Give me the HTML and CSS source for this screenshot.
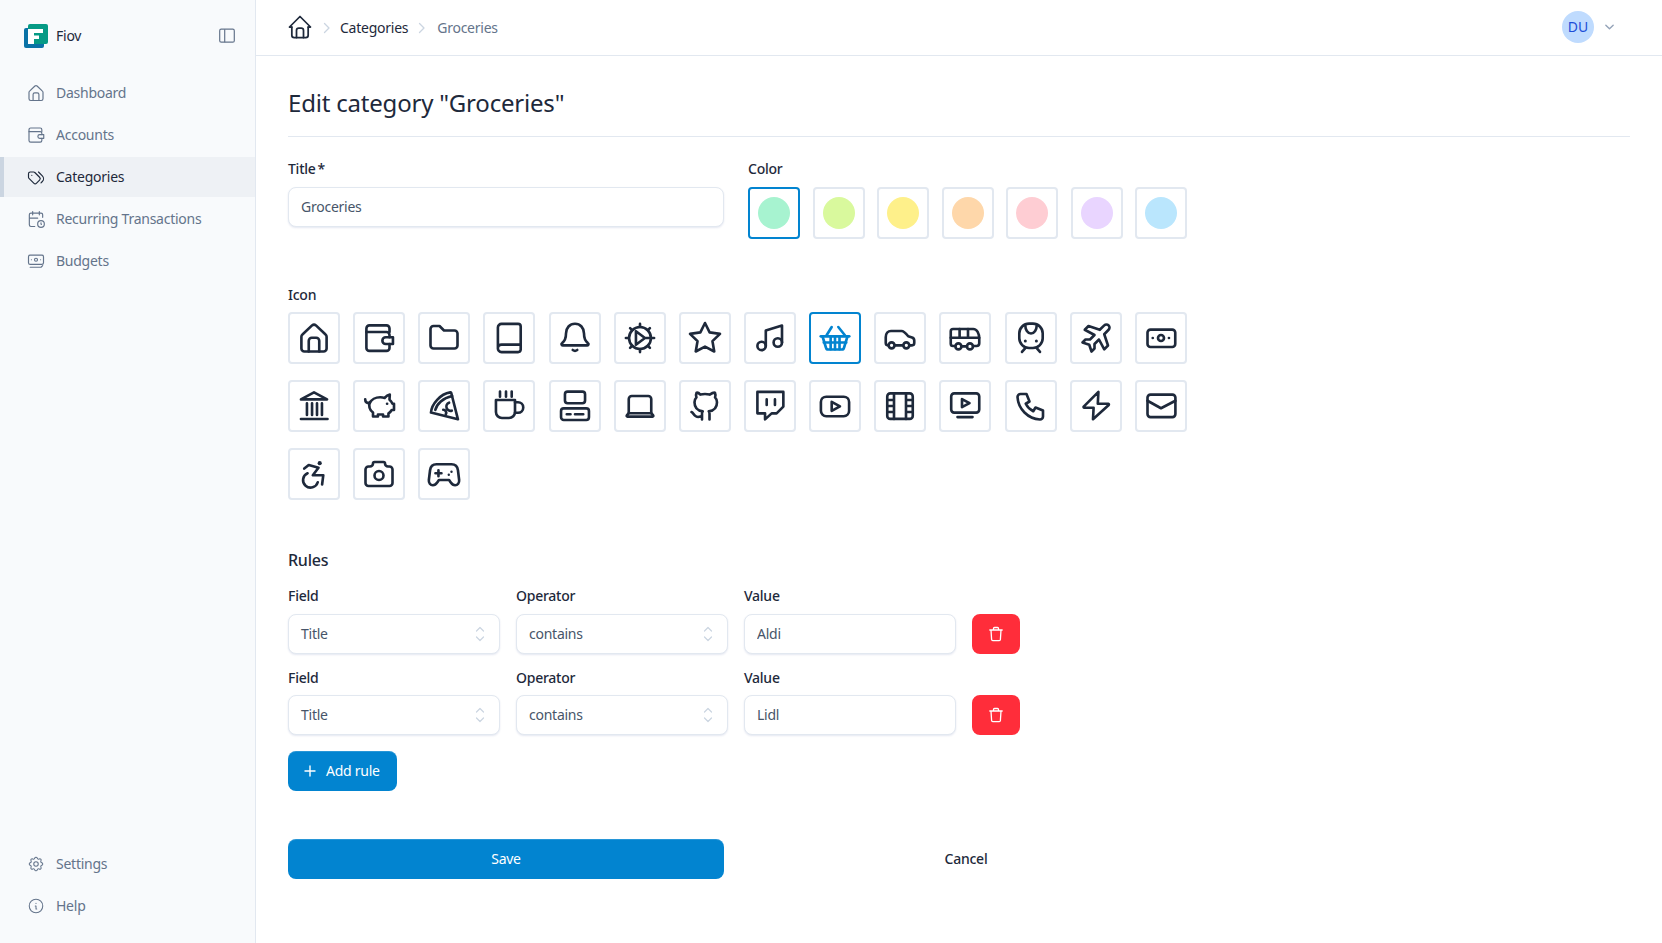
FILE: index.html
```html
<!DOCTYPE html>
<html lang="en">
<head>
<meta charset="utf-8">
<title>Edit category</title>
<link rel="stylesheet" href="styles.css">
</head>
<body>
<svg class="sprite" xmlns="http://www.w3.org/2000/svg">
<defs>
<symbol id="i-home" viewBox="0 0 24 24"><path d="M3.6 11.2a2 2 0 0 1 .7-1.5L10.7 3.6a2 2 0 0 1 2.6 0l6.4 6.1a2 2 0 0 1 .7 1.5V19a2 2 0 0 1-2 2H5.6a2 2 0 0 1-2-2z"/><path d="M8.5 21v-7.2a2 2 0 0 1 2-2h3a2 2 0 0 1 2 2V21"/></symbol>
<symbol id="i-wallet" viewBox="0 0 24 24"><path d="M19 8V5.6a2 2 0 0 0-2-2H5.6a2 2 0 0 0-2 2v13a2 2 0 0 0 2 2H17a2 2 0 0 0 2-2V16"/><path d="M3.6 8H17a2 2 0 0 1 2 2v1.5"/><path d="M21.3 11.5h-4.8a2.2 2.2 0 0 0 0 4.5h4.8z"/></symbol>
<symbol id="i-folder" viewBox="0 0 24 24"><path d="M5 4h4l3 3h7a2 2 0 0 1 2 2v8a2 2 0 0 1-2 2H5a2 2 0 0 1-2-2V6a2 2 0 0 1 2-2"/></symbol>
<symbol id="i-book" viewBox="0 0 24 24"><path d="M4.6 18.8V5A2.4 2.4 0 0 1 7 2.6h11a1.8 1.8 0 0 1 1.8 1.8v15.4a1.8 1.8 0 0 1-1.8 1.6H7a2.4 2.4 0 0 1-2.4-2.6A2.4 2.4 0 0 1 7 16.4h12.8"/></symbol>
<symbol id="i-bell" viewBox="0 0 24 24"><path d="M12 2.5C8.500 2.500 6 5.200 6 9c0 3-1 5.200-2.600 6.400a.8.8 0 0 0 .4 1.500h16.400a.8.8 0 0 0 .4-1.500C19 14.200 18 12 18 9c0-3.800-2.500-6.500-6-6.500z"/><path d="M10.500 20c1 .7 2 .7 3 0"/></symbol>
<symbol id="i-gear" viewBox="0 0 24 24"><circle cx="12" cy="12" r="7.300"/><path d="M12 2.600v2M12 19.400v2M2.600 12h2M19.400 12h2M5.400 5.400l1.400 1.400M17.200 17.200l1.400 1.400M5.400 18.600l1.400-1.400M17.200 6.800l1.400-1.400"/><path d="M9.300 7.500v9l6-4.500zM15.300 12h4"/></symbol>
<symbol id="i-star" viewBox="0 0 24 24"><path d="M12 17.750l-6.172 3.245 1.179-6.873-5-4.867 6.900-1L12 2l3.086 6.253 6.900 1-5 4.867 1.179 6.873z"/></symbol>
<symbol id="i-music" viewBox="0 0 24 24"><circle cx="6.400" cy="17.300" r="2.800"/><circle cx="17.200" cy="15" r="2.800"/><path d="M9.200 17.300V7L20 3.700V15"/></symbol>
<symbol id="i-basket" viewBox="0 0 24 24"><path d="M6.400 10.200l3.400-5.500M14.200 4.700l4.400 5.500"/><path d="M2.500 10.900h19"/><path d="M3.700 11l2.300 7.500a1.500 1.500 0 0 0 1.500 1.200h9a1.500 1.500 0 0 0 1.500-1.200l2.300-7.500"/><path d="M9.100 11v8.500M12 11v8.500M15 11v8.500M4.500 15h15"/></symbol>
<symbol id="i-car" viewBox="0 0 24 24"><circle cx="6.400" cy="16.900" r="2"/><circle cx="16.200" cy="16.900" r="2"/><path d="M4.400 16.900H4a1.500 1.500 0 0 1-1.500-1.500v-3.900C2.500 9 4 7.300 6 7.300h7c1.500 0 2.500 1 4.500 3.500l2.500.8c1 .3 1.500 1 1.500 2v1.800c0 1-.6 1.500-1.500 1.500h-1.800M8.400 16.900h5.800"/></symbol>
<symbol id="i-bus" viewBox="0 0 24 24"><circle cx="7.600" cy="17.600" r="2"/><circle cx="15.300" cy="17.600" r="2"/><path d="M5.600 17.300H4a1.500 1.500 0 0 1-1.500-1.500V7.500A1.500 1.500 0 0 1 4 6h13.500c2.500 0 4 3 4 6.500v3a1.800 1.800 0 0 1-1.800 1.800h-2.400M9.600 17.600h3.700"/><path d="M2.500 11.800h19M8.400 6v5.800M14 6v5.800"/></symbol>
<symbol id="i-train" viewBox="0 0 24 24"><rect x="4.200" y="2.400" width="15.600" height="16.300" rx="6.500"/><path d="M8.200 3.500c0 3 1.500 5.500 3.800 5.500s3.800-2.500 3.800-5.500"/><circle class="solid" cx="8.200" cy="14" r="1"/><circle class="solid" cx="15.600" cy="14" r="1"/><path d="M8.200 18.700L6 21.300M15.800 18.700l2.200 2.600"/></symbol>
<symbol id="i-plane" viewBox="0 0 24 24"><path d="M14.500 6.500l3-2.900a2.050 2.050 0 0 1 2.900 2.900l-2.900 3 2.500 7.500-2.500 2.550-3.500-6.550-3 3v3l-2 2-1.500-4.500-4.500-1.500 2-2h3l3-3-6.500-3.500 2.500-2.500 7.500 2.500"/></symbol>
<symbol id="i-cash" viewBox="0 0 24 24"><rect x="3" y="6.400" width="18.500" height="11.600" rx="2"/><circle cx="12" cy="12" r="2"/><circle class="solid" cx="6.500" cy="12" r=".9"/><circle class="solid" cx="17.300" cy="12" r=".9"/></symbol>
<symbol id="i-bank" viewBox="0 0 24 24"><path d="M3.300 7.600L12 2.900l8.700 4.700z"/><path d="M7.300 10.200V18M10.700 10.200V18M14 10.200V18M17.300 10.200V18M3.300 20.700h17.700"/></symbol>
<symbol id="i-piggy" viewBox="0 0 24 24"><path d="M2.800 7.500c0 1.500 1 2.700 3 2.700"/><path d="M5.800 10.200c1-2.500 4-4 7-4 1 0 2 .1 3 .4.800-1 2-2 3.400-2.200l-.2 3.400c1 .8 1.600 1.800 2 2.700h1v4.200h-1.500c-.6 1-1.300 1.800-2.200 2.300v2h-3.600v-1.300h-3.400v1.300H8v-2.600c-2-1.600-3-4.300-2.200-7z"/><circle class="solid" cx="17.400" cy="10.500" r=".9"/></symbol>
<symbol id="i-pizza" viewBox="0 0 24 24"><path d="M3.300 16.400C3.800 10.500 9.500 4 16.200 2.900a.6.6 0 0 1 .6.3L21.300 20.900z"/><path d="M6.200 14.600c1-4 5-8 11.200-9.300"/><path d="M11.500 14.500a2 2 0 0 1 1.700 3"/><path d="M15.400 9.800a2.800 2.800 0 0 0 1.800 5.300"/></symbol>
<symbol id="i-coffee" viewBox="0 0 24 24"><path d="M6 2.400v3.400M10 2.400v3.400M13.800 2.400v3.400"/><path d="M3.300 8H16v8a4 4 0 0 1-4 4H7.300a4 4 0 0 1-4-4z"/><path d="M16 9.500h2a3.500 3.500 0 0 1 0 7h-2"/></symbol>
<symbol id="i-server" viewBox="0 0 24 24"><rect x="5.300" y="2.400" width="13.400" height="7.800" rx="1.800"/><rect x="2.700" y="13.600" width="18.600" height="7.700" rx="1.800"/><path d="M6.500 17.500H9M12 17.500h5.500"/></symbol>
<symbol id="i-laptop" viewBox="0 0 24 24"><path d="M4.500 16.800V7.300a2 2 0 0 1 2-2h11a2 2 0 0 1 2 2v9.500"/><path d="M4.500 16.800h15l1.300 1.500a.5.5 0 0 1-.4.8H3.600a.5.5 0 0 1-.4-.8z"/></symbol>
<symbol id="i-github" viewBox="0 0 24 24"><path d="M9 19c-4.300 1.400-4.300-2.500-6-3m12 5v-3.500c0-1 .1-1.400-.5-2 2.800-.3 5.500-1.400 5.500-6a4.600 4.600 0 0 0-1.300-3.200 4.200 4.200 0 0 0-.1-3.200s-1.100-.3-3.500 1.300a12.300 12.300 0 0 0-6.200 0C7.500 2.800 6.400 3.100 6.400 3.100a4.200 4.200 0 0 0-.1 3.200A4.600 4.600 0 0 0 5 9.500c0 4.600 2.700 5.700 5.500 6-.6.6-.6 1.200-.5 2V21"/></symbol>
<symbol id="i-twitch" viewBox="0 0 24 24"><path d="M3.600 2.600H20.900v9.800l-4.500 4.500h-3.300l-4.400 4v-4H3.600z"/><path d="M9.800 7.600v3.700M15.300 7.600v3.700"/></symbol>
<symbol id="i-youtube" viewBox="0 0 24 24"><rect x="2.600" y="5.800" width="18.800" height="13" rx="3.600"/><path d="M9.800 9.200l5.500 3-5.500 3z"/></symbol>
<symbol id="i-movie" viewBox="0 0 24 24"><rect x="3.500" y="3.600" width="17" height="17" rx="2"/><path d="M8 3.600v17M16 3.600v17M3.500 8H8M3.500 16H8M3.500 12H8M16 12h4.500M16 8h4.500M16 16h4.500"/></symbol>
<symbol id="i-tv" viewBox="0 0 24 24"><rect x="2.800" y="3.600" width="18.700" height="12.800" rx="2"/><path d="M10 7.400l5 2.700-5 2.700zM7 19.400h10"/></symbol>
<symbol id="i-phone" viewBox="0 0 24 24"><path d="M5 4h4l2 5-2.500 1.500a11 11 0 0 0 5 5l1.500-2.500 5 2v4a2 2 0 0 1-2 2A16 16 0 0 1 3 6a2 2 0 0 1 2-2"/></symbol>
<symbol id="i-bolt" viewBox="0 0 24 24"><path d="M13.600 2.600L3.800 12.400a.5.5 0 0 0 .4.8h6.200l-.4 7.600 10.500-9.500a.5.5 0 0 0-.3-.8h-7z"/></symbol>
<symbol id="i-mail" viewBox="0 0 24 24"><rect x="3" y="4.400" width="18.600" height="15" rx="2"/><path d="M3 8.500l9 5 9.600-5"/></symbol>
<symbol id="i-access" viewBox="0 0 24 24"><circle class="solid" cx="15.800" cy="4.800" r="1.400"/><path d="M5.500 8.400l3-2.400 6.500 1.800-3.800 5h7l-.8 6.200"/><path d="M7.700 11.500a5 5 0 1 0 6.800 6"/></symbol>
<symbol id="i-camera" viewBox="0 0 24 24"><path d="M5 7h1a2 2 0 0 0 2-2 1 1 0 0 1 1-1h6a1 1 0 0 1 1 1 2 2 0 0 0 2 2h1a2 2 0 0 1 2 2v9a2 2 0 0 1-2 2H5a2 2 0 0 1-2-2V9a2 2 0 0 1 2-2"/><circle cx="12" cy="13" r="3"/></symbol>
<symbol id="i-gamepad" viewBox="0 0 24 24"><path d="M7 5.500h10c2.500 0 4 1.500 4.300 4l.8 6.500c.2 2-1 3.500-2.700 3.500-1.300 0-2.200-.8-3-2l-1-1.500H8.600l-1 1.500c-.8 1.200-1.700 2-3 2-1.700 0-2.900-1.500-2.700-3.500l.8-6.500C3 7 4.500 5.500 7 5.500z"/><path d="M6.300 11.500h4M8.300 9.500v4"/><circle class="solid" cx="15.200" cy="12.500" r=".8"/><circle class="solid" cx="17" cy="10.500" r=".8"/></symbol>
<symbol id="i-tags" viewBox="0 0 24 24"><path d="M3 8v4.172a2 2 0 0 0 .586 1.414l5.710 5.710a2.410 2.410 0 0 0 3.408 0l3.592-3.592a2.410 2.410 0 0 0 0-3.408l-5.710-5.710A2 2 0 0 0 9.172 6H5a2 2 0 0 0-2 2z"/><path d="M18 19l1.592-1.592a4.820 4.820 0 0 0 0-6.816L15 6M7 10h-.01"/></symbol>
<symbol id="i-calclock" viewBox="0 0 24 24"><path d="M10.500 21H6a2 2 0 0 1-2-2V7a2 2 0 0 1 2-2h12a2 2 0 0 1 2 2v3M16 3v4M8 3v4M4 11h10"/><circle cx="18" cy="18" r="4"/><path d="M18 16.500V18l.5.5"/></symbol>
<symbol id="i-budget" viewBox="0 0 24 24"><rect x="3" y="5" width="18" height="11" rx="2"/><circle cx="12" cy="10.500" r="1.800"/><path d="M6.500 10.500h.01M17.500 10.500h.01M5 19.500h13l2-2"/></symbol>
<symbol id="i-settings" viewBox="0 0 24 24"><path d="M10.325 4.317c.426-1.756 2.924-1.756 3.350 0a1.724 1.724 0 0 0 2.573 1.066c1.543-.94 3.310.826 2.370 2.370a1.724 1.724 0 0 0 1.065 2.572c1.756.426 1.756 2.924 0 3.350a1.724 1.724 0 0 0-1.066 2.573c.94 1.543-.826 3.310-2.370 2.370a1.724 1.724 0 0 0-2.572 1.065c-.426 1.756-2.924 1.756-3.350 0a1.724 1.724 0 0 0-2.573-1.066c-1.543.94-3.310-.826-2.370-2.370a1.724 1.724 0 0 0-1.065-2.572c-1.756-.426-1.756-2.924 0-3.350a1.724 1.724 0 0 0 1.066-2.573c-.94-1.543.826-3.310 2.370-2.370 1 .608 2.296.07 2.572-1.065z"/><circle cx="12" cy="12" r="3"/></symbol>
<symbol id="i-info" viewBox="0 0 24 24"><circle cx="12" cy="12" r="9"/><path d="M12 8.500h.01M11 12h1v4h1"/></symbol>
<symbol id="i-bchome" viewBox="0 0 24 24"><path d="M5 12H3l9-9 9 9h-2"/><path d="M5 12v7a2 2 0 0 0 2 2h10a2 2 0 0 0 2-2v-7"/><path d="M9 21v-6a2 2 0 0 1 2-2h2a2 2 0 0 1 2 2v6"/></symbol>
<symbol id="i-updown" viewBox="0 0 16 24"><path d="M4.500 9L8 5.500 11.500 9M4.500 15L8 18.500 11.500 15"/></symbol>
<symbol id="i-trash" viewBox="0 0 16 16"><path d="M1.800 4h12.400M5.500 4V2.500a1 1 0 0 1 1-1h3a1 1 0 0 1 1 1V4M3 4l.6 9.500a1.200 1.200 0 0 0 1.200 1.100h6.400a1.200 1.200 0 0 0 1.200-1.100L13 4"/></symbol>
</defs>
</svg>

<div class="app">
  <aside class="sidebar">
    <div class="side-top">
      <div class="brand">
        <svg class="logo" viewBox="0 0 24 24"><rect class="logo-blue" x="0" y="4" width="20" height="20" rx="2"/><rect class="logo-green" x="4" y="0" width="20" height="20" rx="2"/><rect class="logo-f" x="4" y="5" width="6" height="15"/><rect class="logo-f" x="4" y="5" width="15" height="4"/><rect class="logo-f" x="4" y="11.500" width="11" height="3.500"/></svg>
        <span class="brand-name">Fiov</span>
        <svg class="toggle" viewBox="0 0 16 16"><rect x="0.700" y="1.200" width="14.600" height="13" rx="1.500"/><path d="M5.700 1.200v13"/></svg>
      </div>
      <nav class="nav">
        <a class="nav-item"><svg class="ic nav-ic"><use href="#i-home"/></svg>Dashboard</a>
        <a class="nav-item"><svg class="ic nav-ic"><use href="#i-wallet"/></svg>Accounts</a>
        <a class="nav-item active"><svg class="ic nav-ic"><use href="#i-tags"/></svg>Categories</a>
        <a class="nav-item"><svg class="ic nav-ic"><use href="#i-calclock"/></svg>Recurring Transactions</a>
        <a class="nav-item"><svg class="ic nav-ic"><use href="#i-budget"/></svg>Budgets</a>
      </nav>
    </div>
    <nav class="nav nav-bottom">
      <a class="nav-item"><svg class="ic nav-ic small"><use href="#i-settings"/></svg>Settings</a>
      <a class="nav-item"><svg class="ic nav-ic small"><use href="#i-info"/></svg>Help</a>
    </nav>
  </aside>

  <div class="main">
    <header class="topbar">
      <div class="crumbs">
        <svg class="ic crumb-home"><use href="#i-bchome"/></svg>
        <svg class="crumb-sep first" viewBox="0 0 8 12"><path d="M1.500 1.500L6 6l-4.500 4.500"/></svg>
        <span class="crumb-link">Categories</span>
        <svg class="crumb-sep" viewBox="0 0 8 12"><path d="M1.500 1.500L6 6l-4.500 4.500"/></svg>
        <span class="crumb-cur">Groceries</span>
      </div>
      <div class="user">
        <span class="avatar">DU</span>
        <svg class="user-chev" viewBox="0 0 12 8"><path d="M2 2l4 4 4-4"/></svg>
      </div>
    </header>

    <main class="content">
      <h1 class="title">Edit category "Groceries"</h1>
      <form class="form">
        <div class="top-row">
          <div class="col">
            <label class="label">Title<span class="req">*</span></label>
            <input class="field" value="Groceries">
          </div>
          <div class="col">
            <span class="label">Color</span>
            <div class="colors">
              <span class="tile selected"><span class="dot-c c1"></span></span>
              <span class="tile"><span class="dot-c c2"></span></span>
              <span class="tile"><span class="dot-c c3"></span></span>
              <span class="tile"><span class="dot-c c4"></span></span>
              <span class="tile"><span class="dot-c c5"></span></span>
              <span class="tile"><span class="dot-c c6"></span></span>
              <span class="tile"><span class="dot-c c7"></span></span>
            </div>
          </div>
        </div>

        <section class="icon-sec">
          <span class="label">Icon</span>
          <div class="icons">
            <span class="tile"><svg class="ic big"><use href="#i-home"/></svg></span>
            <span class="tile"><svg class="ic big"><use href="#i-wallet"/></svg></span>
            <span class="tile"><svg class="ic big"><use href="#i-folder"/></svg></span>
            <span class="tile"><svg class="ic big"><use href="#i-book"/></svg></span>
            <span class="tile"><svg class="ic big"><use href="#i-bell"/></svg></span>
            <span class="tile"><svg class="ic big"><use href="#i-gear"/></svg></span>
            <span class="tile"><svg class="ic big"><use href="#i-star"/></svg></span>
            <span class="tile"><svg class="ic big"><use href="#i-music"/></svg></span>
            <span class="tile selected"><svg class="ic big"><use href="#i-basket"/></svg></span>
            <span class="tile"><svg class="ic big"><use href="#i-car"/></svg></span>
            <span class="tile"><svg class="ic big"><use href="#i-bus"/></svg></span>
            <span class="tile"><svg class="ic big"><use href="#i-train"/></svg></span>
            <span class="tile"><svg class="ic big"><use href="#i-plane"/></svg></span>
            <span class="tile"><svg class="ic big"><use href="#i-cash"/></svg></span>
            <span class="tile"><svg class="ic big"><use href="#i-bank"/></svg></span>
            <span class="tile"><svg class="ic big"><use href="#i-piggy"/></svg></span>
            <span class="tile"><svg class="ic big"><use href="#i-pizza"/></svg></span>
            <span class="tile"><svg class="ic big"><use href="#i-coffee"/></svg></span>
            <span class="tile"><svg class="ic big"><use href="#i-server"/></svg></span>
            <span class="tile"><svg class="ic big"><use href="#i-laptop"/></svg></span>
            <span class="tile"><svg class="ic big"><use href="#i-github"/></svg></span>
            <span class="tile"><svg class="ic big"><use href="#i-twitch"/></svg></span>
            <span class="tile"><svg class="ic big"><use href="#i-youtube"/></svg></span>
            <span class="tile"><svg class="ic big"><use href="#i-movie"/></svg></span>
            <span class="tile"><svg class="ic big"><use href="#i-tv"/></svg></span>
            <span class="tile"><svg class="ic big"><use href="#i-phone"/></svg></span>
            <span class="tile"><svg class="ic big"><use href="#i-bolt"/></svg></span>
            <span class="tile"><svg class="ic big"><use href="#i-mail"/></svg></span>
            <span class="tile"><svg class="ic big"><use href="#i-access"/></svg></span>
            <span class="tile"><svg class="ic big"><use href="#i-camera"/></svg></span>
            <span class="tile"><svg class="ic big"><use href="#i-gamepad"/></svg></span>
          </div>
        </section>

        <section class="rules">
          <h2 class="rules-title">Rules</h2>
          <div class="rule">
            <div class="col"><span class="label">Field</span><div class="select">Title<svg class="updown"><use href="#i-updown"/></svg></div></div>
            <div class="col"><span class="label">Operator</span><div class="select">contains<svg class="updown"><use href="#i-updown"/></svg></div></div>
            <div class="col"><span class="label">Value</span><input class="field" value="Aldi"></div>
            <button type="button" class="del"><svg class="trash"><use href="#i-trash"/></svg></button>
          </div>
          <div class="rule">
            <div class="col"><span class="label">Field</span><div class="select">Title<svg class="updown"><use href="#i-updown"/></svg></div></div>
            <div class="col"><span class="label">Operator</span><div class="select">contains<svg class="updown"><use href="#i-updown"/></svg></div></div>
            <div class="col"><span class="label">Value</span><input class="field" value="Lidl"></div>
            <button type="button" class="del"><svg class="trash"><use href="#i-trash"/></svg></button>
          </div>
          <button type="button" class="btn add"><svg class="plus" viewBox="0 0 12 12"><path d="M6 1v10M1 6h10"/></svg>Add rule</button>
        </section>

        <div class="actions">
          <button type="button" class="btn save">Save</button>
          <button type="button" class="cancel">Cancel</button>
        </div>
      </form>
    </main>
  </div>
</div>
</body>
</html>
```
FILE: styles.css
```css
* { box-sizing: border-box; }
html, body { margin: 0; height: 100%; }
body {
  font-family: "Noto Sans", "Open Sans", sans-serif;
  font-size: 14px;
  line-height: 20px;
  color: #1e293b;
  background: #fff;
  overflow: hidden;
  letter-spacing: -0.25px;
}
.sprite { width: 0; height: 0; position: absolute; }
.ic { fill: none; stroke: currentColor; stroke-width: 1.5; stroke-linecap: round; stroke-linejoin: round; }
.solid { fill: currentColor; stroke: none; }
.app { display: flex; height: 943px; }

.sidebar {
  width: 256px;
  flex: none;
  background: #f8fafc;
  border-right: 1px solid #e2e8f0;
  display: flex;
  flex-direction: column;
  justify-content: space-between;
  padding-bottom: 17px;
}
.brand { display: flex; align-items: center; height: 72px; padding: 0 20px 0 24px; }
.logo { width: 24px; height: 24px; flex: none; }
.logo-blue { fill: #0a72a6; }
.logo-green { fill: #069a85; }
.logo-f { fill: #fff; }
.brand-name { margin-left: 8px; color: #1e293b; flex: 1; }
.toggle { width: 16px; height: 16px; fill: none; stroke: #64748b; stroke-width: 1.2; }
.nav { display: flex; flex-direction: column; gap: 2px; }
.side-top .nav { margin-top: 1px; }
.nav-item {
  display: flex;
  align-items: center;
  height: 40px;
  padding-left: 26px;
  color: #64748b;
}
.nav-ic { width: 20px; height: 20px; margin-right: 10px; flex: none; stroke-width: 1.4; }
.nav-ic.small { width: 18px; height: 18px; margin: 0 11px 0 1px; }
.nav-item.active {
  background: #eef1f5;
  color: #1e293b;
  padding-left: 22px;
  border-left: 4px solid #cbd5e1;
}

.main { flex: 1; min-width: 0; display: flex; flex-direction: column; }
.topbar {
  height: 56px;
  flex: none;
  border-bottom: 1px solid #e2e8f0;
  display: flex;
  align-items: center;
  justify-content: space-between;
  padding: 0 47px 0 30px;
}
.crumbs { display: flex; align-items: center; }
.crumb-home { width: 28px; height: 28px; color: #1e293b; margin-top: -1px; }
.crumb-sep { width: 8px; height: 12px; margin: 0 11px 0 10px; fill: none; stroke: #cbd5e1; stroke-width: 1.3; stroke-linecap: round; stroke-linejoin: round; }
.crumb-sep.first { margin: 0 9px; }
.crumb-link { color: #1e293b; }
.crumb-cur { color: #64748b; }
.user { display: flex; align-items: center; gap: 10px; margin-top: -1px; }
.avatar {
  width: 32px; height: 32px;
  border-radius: 50%;
  background: #bfdbfe;
  color: #1d4ed8;
  letter-spacing: 0;
  display: flex; align-items: center; justify-content: center;
}
.user-chev { width: 11px; height: 8px; fill: none; stroke: #94a3b8; stroke-width: 1.5; stroke-linecap: round; stroke-linejoin: round; }

.content { padding: 32px 32px 0; }
.title {
  margin: 0;
  font-size: 24px;
  line-height: 30px;
  font-weight: 400;
  padding-bottom: 18px;
  border-bottom: 1px solid #e2e8f0;
  letter-spacing: -0.2px;
}
.form { padding-top: 22px; }
.top-row { display: grid; grid-template-columns: 436px 1fr; column-gap: 24px; }
.col { display: flex; flex-direction: column; }
.label { display: block; height: 20px; margin-bottom: 8px; font-weight: 500; color: #1e293b; }
.req { margin-left: 2px; }
.field, .select {
  height: 39.5px;
  width: 100%;
  border: 1px solid #e2e8f0;
  border-radius: 8px;
  background: #fff;
  box-shadow: 0 1px 2px rgba(30, 58, 138, 0.12);
  padding: 0 12px;
  font: inherit;
  letter-spacing: inherit;
  color: #475569;
  outline: none;
}
.select { display: flex; align-items: center; justify-content: space-between; padding-right: 11px; }
.updown { width: 16px; height: 24px; fill: none; stroke: #cbd5e1; stroke-width: 1.2; stroke-linecap: round; stroke-linejoin: round; }

.tile {
  width: 52px; height: 52px;
  border: 2px solid #e2e8f0;
  border-radius: 4px;
  display: flex; align-items: center; justify-content: center;
  background: #fff;
}
.tile.selected { border-color: #0284d0; color: #0284d0; }
.colors { display: flex; gap: 12.5px; }
.dot-c { width: 32px; height: 32px; border-radius: 50%; }
.c1 { background: #a7f3d0; }
.c2 { background: #d9f99d; }
.c3 { background: #fef08a; }
.c4 { background: #fed7aa; }
.c5 { background: #fecdd3; }
.c6 { background: #e9d5ff; }
.c7 { background: #bae6fd; }

.icon-sec { margin-top: 46px; }
.icon-sec .label { margin-bottom: 7px; }
.icons { display: grid; grid-template-columns: repeat(14, 52px); column-gap: 13.15px; row-gap: 16px; }
.big { width: 36px; height: 36px; stroke-width: 1.75; }

.rules { margin-top: 48px; }
.rules-title { margin: 0 0 14px; font-size: 16px; line-height: 24px; font-weight: 500; color: #1e293b; }
.rule { display: grid; grid-template-columns: 212px 212px 212px 48px; column-gap: 16px; align-items: end; margin-bottom: 14.67px; }
.rule + .rule .label { margin-bottom: 7px; }
.del {
  height: 39.5px;
  border: 0;
  border-radius: 8px;
  background: #ff2d3a;
  display: flex; align-items: center; justify-content: center;
  padding: 0;
}
.trash { width: 16px; height: 16px; fill: none; stroke: #fff; stroke-width: 1.3; stroke-linecap: round; stroke-linejoin: round; }
.btn {
  height: 40px;
  border: 0;
  border-radius: 8px;
  background: #0284d0;
  color: #fff;
  font: inherit;
  letter-spacing: inherit;
  box-shadow: inset 0 1px 0 rgba(255, 255, 255, 0.15);
}
.add { display: flex; align-items: center; width: 109px; padding: 0 0 0 16px; margin-top: 16.5px; }
.plus { width: 12px; height: 12px; margin-right: 10px; fill: none; stroke: #fff; stroke-width: 1.4; stroke-linecap: round; }
.actions { display: grid; grid-template-columns: 436px 436px; column-gap: 24px; margin-top: 48px; }
.save { width: 100%; }
.cancel { height: 40px; border: 0; background: transparent; font: inherit; letter-spacing: inherit; color: #1e293b; font-weight: 500; }
```
